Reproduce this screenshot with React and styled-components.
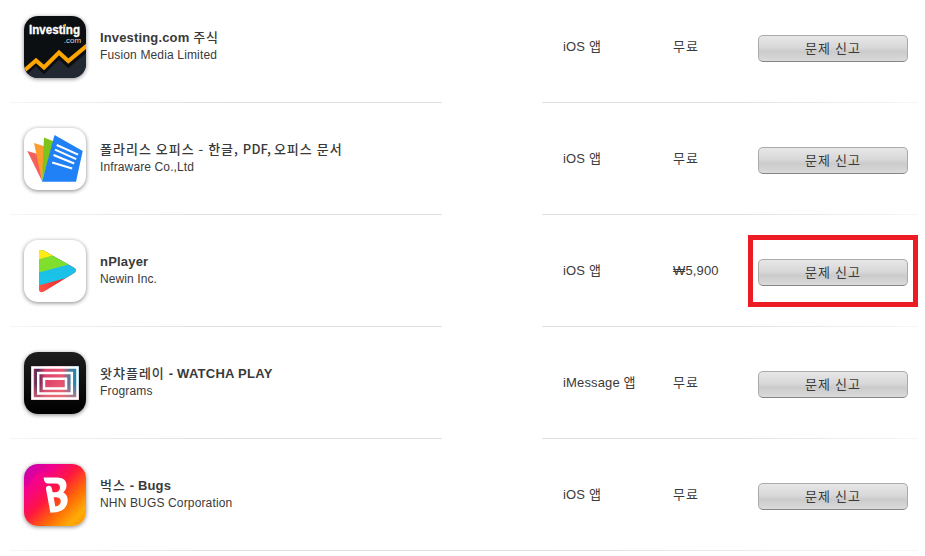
import React from "react";
import styled, { createGlobalStyle, css } from "styled-components";

const GlobalStyle = createGlobalStyle`
  body { margin: 0; background: #fff; overflow: hidden; }
`;

const PurchaseList = styled.main`
  width: 908px;
  height: 551px;
  margin-left: 10px;
  font-family: "Liberation Sans", "Noto Sans CJK KR", sans-serif;
  color: #3a3a3a;
`;

const line = (colors) => css`
  background: linear-gradient(90deg, ${colors}) bottom / 100% 1px no-repeat;
`;

const Row = styled.article`
  display: grid;
  grid-template-columns: 432px 376px;
  column-gap: 100px;
  height: ${(p) => (p.$first ? 103 : 112)}px;
  ${(p) => p.$last && line("#f5f5f5, #dfdfdf 25%, #dfdfdf 60%, #f6f6f6")}
`;

const AppCell = styled.div`
  display: flex;
  align-items: flex-end;
  gap: 14px;
  padding: 0 0 25px 14px;
  ${(p) => !p.$last && line("#f5f5f5, #dfdfdf 50%, #dfdfdf")}
`;

const Details = styled.div`
  display: grid;
  grid-template-columns: 110px 85px 150px;
  align-items: end;
  padding: 0 0 41px 21px;
  ${(p) => !p.$last && line("#dfdfdf, #dfdfdf 45%, #f6f6f6")}
`;

const AppIcon = styled.svg`
  width: 62px;
  height: 62px;
  flex: none;
  border-radius: 14px;
  background: #fff;
  box-shadow: 0 1px 4px rgba(0, 0, 0, 0.48);
`;

const AppInfo = styled.div`
  height: 49px;
  white-space: nowrap;
`;

const Title = styled.h2`
  margin: 0;
  font-size: 13px;
  font-weight: 700;
  line-height: 18px;
  letter-spacing: ${(p) => p.$spacing}px;
`;

const Developer = styled.p`
  margin: 0;
  font-size: 12px;
  line-height: 17px;
  letter-spacing: ${(p) => p.$spacing}px;
`;

const Korean = styled.span`
  font-family: "Noto Sans CJK KR", sans-serif;
  font-size: 13px;
  line-height: 1;
  font-weight: ${(p) => (p.$medium ? 500 : 400)};
  letter-spacing: ${(p) => p.$spacing ?? 1}px;
`;

const Cell = styled.span`
  height: 25px;
  font-size: 13px;
  line-height: 19px;
  letter-spacing: 0.15px;
  white-space: nowrap;
`;

const ReportButton = styled.button`
  display: block;
  width: 150px;
  height: 27px;
  padding: 0 0 2px;
  border: 1px solid #aaa;
  border-bottom-color: #858585;
  border-radius: 5px;
  background: linear-gradient(#e7e7e7, #d8d8d8 46%, #cbcbcb 62%, #dadada);
  color: #3a3a3a;
  font-family: "Noto Sans CJK KR", sans-serif;
  font-size: 13px;
  line-height: 20px;
  letter-spacing: 1px;
`;

const ButtonSlot = styled.div`
  position: relative;
  height: 27px;
`;

const Highlight = styled.div`
  position: absolute;
  top: -24px;
  left: -10px;
  box-sizing: border-box;
  width: 170px;
  height: 72px;
  border: 5px solid #ed1c24;
  pointer-events: none;
`;

function InvestingIcon() {
  return (
    <AppIcon viewBox="0 0 62 62">
      <rect width="62" height="62" fill="#0c0f11" />
      <path d="M0 59 12 49l8 8 15-15 9.5 9.5L62 36v26H0Z" fill="#222831" />
      <path d="m1 57 11-10 8 8 15-15 9.3 9L62 34" fill="none" stroke="#0c0f11" strokeWidth="5" />
      <path d="m1 54 11-9.5 8 7 15-15 9.3 8.5L63 29.5" fill="none" stroke="#ffa500" strokeWidth="4" />
      <text x="5" y="18.2" fill="#fff" stroke="#fff" strokeWidth=".3" fontFamily="Liberation Sans" fontSize="12" fontWeight="700" textLength="51" lengthAdjust="spacingAndGlyphs">Investing</text>
      <path d="m39 9.5 3-2v3h-3Z" fill="#ffa500" />
      <text x="39.8" y="26.6" fill="#ddd" fontFamily="Liberation Sans" fontSize="8" textLength="17.2" lengthAdjust="spacingAndGlyphs">.com</text>
    </AppIcon>
  );
}

function PolarisIcon() {
  return (
    <AppIcon viewBox="0 0 62 62">
      <path d="m3.3 23 12 3.5L18 53Z" fill="#f4605b" />
      <path d="m10 15 11 3.5L18 53Z" fill="#ff9c2f" />
      <path d="m20 9.5 10 4L18 53Z" fill="#7cc31a" />
      <path d="m30.5 7 28.2 16L52 53.7H18Z" fill="#2080f6" />
      <path d="m32.7 17 21.4 9.6M31 21.7l21.2 9.5M29.5 27l20.7 8.5M28.2 34.5l20 6" stroke="#fff" strokeWidth="2" />
    </AppIcon>
  );
}

function PlayerIcon() {
  return (
    <AppIcon viewBox="0 0 62 62">
      <clipPath id="play-shape">
        <path d="M15 13c0-3 2-3.8 4.5-2.5l30.3 17c3 1.7 2.6 4.3 0 5.8L20 51.5c-3 1.6-5 .6-5-2Z" />
      </clipPath>
      <linearGradient id="play-red" x2="1"><stop stopColor="#ff5648" /><stop offset=".7" stopColor="#e9222a" /></linearGradient>
      <linearGradient id="play-blue" x2="0" y2="1"><stop stopColor="#26b4e9" /><stop offset="1" stopColor="#16c7e7" /></linearGradient>
      <g clipPath="url(#play-shape)">
        <path d="M14 8h40v46H14Z" fill="url(#play-red)" />
        <path d="M14 8h40v27L14 45.5Z" fill="url(#play-blue)" />
        <path d="M14 8h40v14L14 32.7Z" fill="#80df2d" />
        <path d="M14 8h20v6L14 19.5Z" fill="#ffeb12" />
      </g>
    </AppIcon>
  );
}

function WatchaIcon() {
  return (
    <AppIcon viewBox="0 0 62 62">
      <defs>
        <linearGradient id="watcha-bg" x2="0" y2="1"><stop stopColor="#1d1d1d" /><stop offset="1" /></linearGradient>
        <linearGradient id="watcha-color" x2="1">
          <stop stopColor="#d24b73" /><stop offset=".13" stopColor="#442452" /><stop offset=".3" stopColor="#dc426c" /><stop offset=".65" stopColor="#ec536c" /><stop offset=".82" stopColor="#417fa0" /><stop offset="1" stopColor="#168bab" />
        </linearGradient>
        <linearGradient id="watcha-warm" x2="0" y2="1"><stop offset=".5" stopColor="#dd6b7c" stopOpacity="0" /><stop offset="1" stopColor="#e9787d" stopOpacity=".85" /></linearGradient>
      </defs>
      <rect width="62" height="62" fill="url(#watcha-bg)" />
      <rect x="7" y="14" width="48" height="34" fill="url(#watcha-color)" />
      <rect x="7" y="14" width="48" height="34" fill="url(#watcha-warm)" />
      <path d="M8.5 15.5h45v31h-45ZM14.2 21h33.6v20.4H14.2ZM20 26.8h22v9.8H20Z" fill="none" stroke="#fff" strokeWidth="2.5" />
    </AppIcon>
  );
}

function BugsIcon() {
  return (
    <AppIcon viewBox="0 0 62 62">
      <defs>
        <linearGradient id="bugs-bg" x2="1" y2="1"><stop stopColor="#bd00b7" /><stop offset=".25" stopColor="#f0008d" /><stop offset=".46" stopColor="#ff173e" /><stop offset=".66" stopColor="#ff6808" /><stop offset=".85" stopColor="#ffac05" /><stop offset="1" stopColor="#ff8c00" /></linearGradient>
        <linearGradient id="bugs-wave" x2="1" y2="1"><stop stopColor="#ff00a8" /><stop offset=".7" stopColor="#ff163e" stopOpacity="0" /></linearGradient>
      </defs>
      <rect width="62" height="62" fill="url(#bugs-bg)" />
      <path d="M0 23c8-1 6-7 12-12s14 0 19-4 11-2 15 3L9 54 0 48Z" fill="url(#bugs-wave)" opacity=".7" />
      <path d="M19.7 13.5H33c6.2 0 9.5 3 9.5 7.8 0 3.2-1.3 5.6-3.2 7.2 3.2 1.8 4.8 4.8 4.3 9-.7 6-5 9.7-11.2 10.7l-6 .6L22 25c-.6-4 5-4.5 5.7-1l1 4.3H31c3.2-.2 5-1.8 5-4.6 0-2.5-1.5-4.2-4-4.2h-8.2c-2.7 0-4-2.8-4.1-6ZM29.7 33.3l1.6 9.3c3.5-.5 5.5-2.5 5.5-5.3 0-2.8-2.3-4.2-7.1-4Z" fill="#fff" fillRule="evenodd" />
    </AppIcon>
  );
}

const apps = [
  { Icon: InvestingIcon, title: <>Investing.com <Korean $medium>주식</Korean></>, spacing: 0.15, developer: "Fusion Media Limited", devSpacing: 0.15 },
  { Icon: PolarisIcon, title: <Korean $medium>폴라리스 오피스 - 한글, <Korean $medium $spacing={0.1}>PDF, </Korean>오피스 문서</Korean>, developer: "Infraware Co.,Ltd", devSpacing: 0.12 },
  { Icon: PlayerIcon, title: "nPlayer", spacing: 0.2, developer: "Newin Inc.", devSpacing: 0.1, price: "₩5,900", highlighted: true },
  { Icon: WatchaIcon, title: <><Korean $medium>왓챠플레이</Korean> - WATCHA PLAY</>, spacing: 0.25, developer: "Frograms", devSpacing: 0.15, kind: "iMessage" },
  { Icon: BugsIcon, title: <><Korean $medium>벅스</Korean> - Bugs</>, spacing: 0.15, developer: "NHN BUGS Corporation", devSpacing: 0.15 },
];

export default function App() {
  return (
    <>
      <GlobalStyle />
      <PurchaseList>
        {apps.map(({ Icon, title, spacing = 0, developer, devSpacing, kind = "iOS", price, highlighted }, i) => {
          const last = i === apps.length - 1;
          return (
            <Row key={developer} $first={i === 0} $last={last}>
              <AppCell $last={last}>
                <Icon />
                <AppInfo>
                  <Title $spacing={spacing}>{title}</Title>
                  <Developer $spacing={devSpacing}>{developer}</Developer>
                </AppInfo>
              </AppCell>
              <Details $last={last}>
                <Cell>{kind} <Korean>앱</Korean></Cell>
                <Cell>{price ?? <Korean>무료</Korean>}</Cell>
                <ButtonSlot>
                  <ReportButton>문제 신고</ReportButton>
                  {highlighted && <Highlight />}
                </ButtonSlot>
              </Details>
            </Row>
          );
        })}
      </PurchaseList>
    </>
  );
}
